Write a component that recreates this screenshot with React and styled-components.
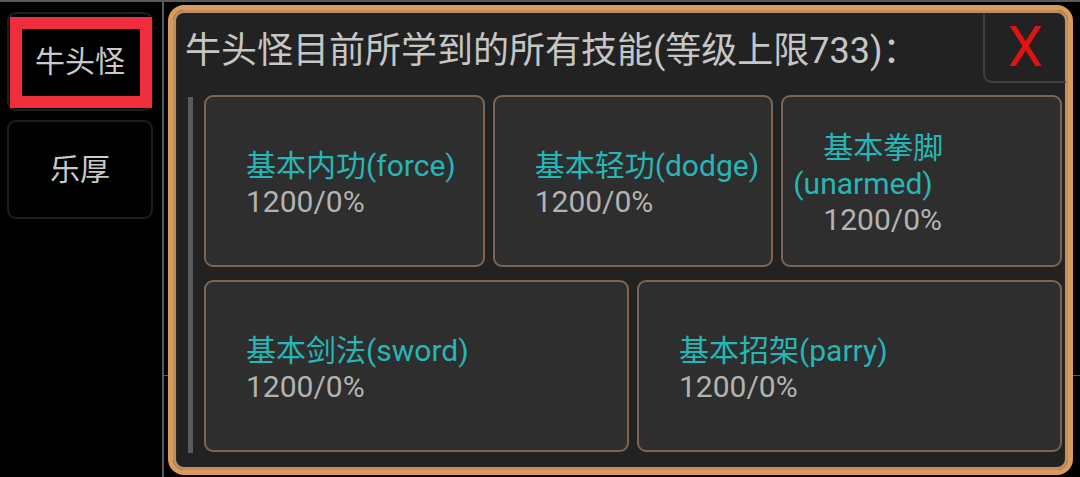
import React from "react";
import styled, { createGlobalStyle } from "styled-components";

const GlobalStyle = createGlobalStyle`
  html, body {
    margin: 0;
    padding: 0;
    background: #000;
  }
  body {
    font-family: Roboto, "Noto Sans CJK SC", sans-serif;
    -webkit-font-smoothing: antialiased;
  }
`;

const Screen = styled.div`
  display: flex;
  width: 1080px;
  height: 477px;
  box-sizing: border-box;
  border-top: 2px solid #5a5a5a;
  background: #000;
  overflow: hidden;
`;

const Sidebar = styled.nav`
  width: 164px;
  flex: none;
  box-sizing: border-box;
  padding: 10px 9px 0 7px;
  display: flex;
  flex-direction: column;
  gap: 9px;
  border-right: 2px solid #595959;
`;

const Tab = styled.div`
  position: relative;
  height: 99px;
  box-sizing: border-box;
  border: 2px solid #221d1a;
  border-radius: 9px;
  background: #000;
  display: flex;
  align-items: center;
  justify-content: center;
  color: #c9c9c9;
  font-size: 30px;
  line-height: 36px;
`;

const SelectedFrame = styled.span`
  position: absolute;
  left: 1px;
  top: 3px;
  right: -1px;
  bottom: 1px;
  border: 12px solid #f02d3d;
  pointer-events: none;
`;

const TabLabel = styled.span`
  position: relative;
`;

const Main = styled.main`
  position: relative;
  flex: 1;
  min-width: 0;
  box-sizing: border-box;
  padding: 3px 7px 2px 4px;
  display: flex;

  &::before {
    content: "";
    position: absolute;
    left: 0;
    right: 0;
    top: 373px;
    height: 1px;
    background: #5a5a5a;
  }
`;

const Panel = styled.section`
  position: relative;
  flex: 1;
  display: flex;
  flex-direction: column;
  box-sizing: border-box;
  border: 5px solid #d99a5b;
  border-radius: 16px;
  background: #222222;
  box-shadow: inset 0 0 0 3px #b98f66, inset 0 0 0 4px #2a2521;
  padding: 3px;
`;

const Header = styled.header`
  display: flex;
  align-items: stretch;
  height: 70px;
  flex: none;
`;

const Title = styled.h1`
  flex: 1;
  margin: 0 0 3px;
  padding-left: 9px;
  display: flex;
  align-items: center;
  font-size: 36px;
  font-weight: 400;
  color: #c6c6c6;
  white-space: nowrap;
  overflow: hidden;
`;

const CloseBox = styled.button`
  width: 83px;
  flex: none;
  margin: 0 -1px 0 0;
  padding: 0;
  box-sizing: border-box;
  background: transparent;
  border: none;
  border-left: 2px solid #4a3e34;
  border-bottom: 2px solid #4a3e34;
  border-bottom-left-radius: 9px;
  display: flex;
  align-items: center;
  justify-content: center;
  font-family: Roboto, sans-serif;
  font-size: 56px;
  line-height: 1;
  color: #de1414;
  cursor: pointer;
`;

const Body = styled.div`
  flex: 1;
  display: flex;
  gap: 11px;
  padding: 12px 3px 15px 12px;
  min-height: 0;
`;

const ScrollTrack = styled.div`
  width: 5px;
  flex: none;
  margin: 2px 0 -1px;
  background: #5b5b5b;
`;

const Grid = styled.div`
  flex: 1;
  display: flex;
  flex-direction: column;
  gap: 13px;
`;

const Row = styled.div`
  flex: 1;
  display: flex;
  gap: 8px;
`;

const Card = styled.div`
  flex: 1;
  min-width: 0;
  box-sizing: border-box;
  border: 2px solid #7c6553;
  border-radius: 9px;
  background: #2e2e2e;
  padding: 5px 9px 0 10px;
  display: flex;
  flex-direction: column;
  justify-content: center;
  font-size: 30px;
  line-height: 36px;
`;

const SkillName = styled.div`
  color: #27b6b6;
  text-indent: 30px;
`;

const SkillValue = styled.div`
  color: #b3b3b3;
  text-indent: 30px;
`;

const rows = [
  [
    { name: "基本内功(force)", value: "1200/0%" },
    { name: "基本轻功(dodge)", value: "1200/0%" },
    { name: "基本拳脚(unarmed)", value: "1200/0%" },
  ],
  [
    { name: "基本剑法(sword)", value: "1200/0%" },
    { name: "基本招架(parry)", value: "1200/0%" },
  ],
];

const tabs = [
  { label: "牛头怪", selected: true },
  { label: "乐厚", selected: false },
];

export default function App() {
  return (
    <>
      <GlobalStyle />
      <Screen>
        <Sidebar>
          {tabs.map((t) => (
            <Tab key={t.label}>
              {t.selected && <SelectedFrame />}
              <TabLabel>{t.label}</TabLabel>
            </Tab>
          ))}
        </Sidebar>
        <Main>
          <Panel>
            <Header>
              <Title>牛头怪目前所学到的所有技能(等级上限733)：</Title>
              <CloseBox aria-label="关闭">X</CloseBox>
            </Header>
            <Body>
              <ScrollTrack />
              <Grid>
                {rows.map((row, i) => (
                  <Row key={i}>
                    {row.map((s) => (
                      <Card key={s.name}>
                        <SkillName>{s.name}</SkillName>
                        <SkillValue>{s.value}</SkillValue>
                      </Card>
                    ))}
                  </Row>
                ))}
              </Grid>
            </Body>
          </Panel>
        </Main>
      </Screen>
    </>
  );
}
